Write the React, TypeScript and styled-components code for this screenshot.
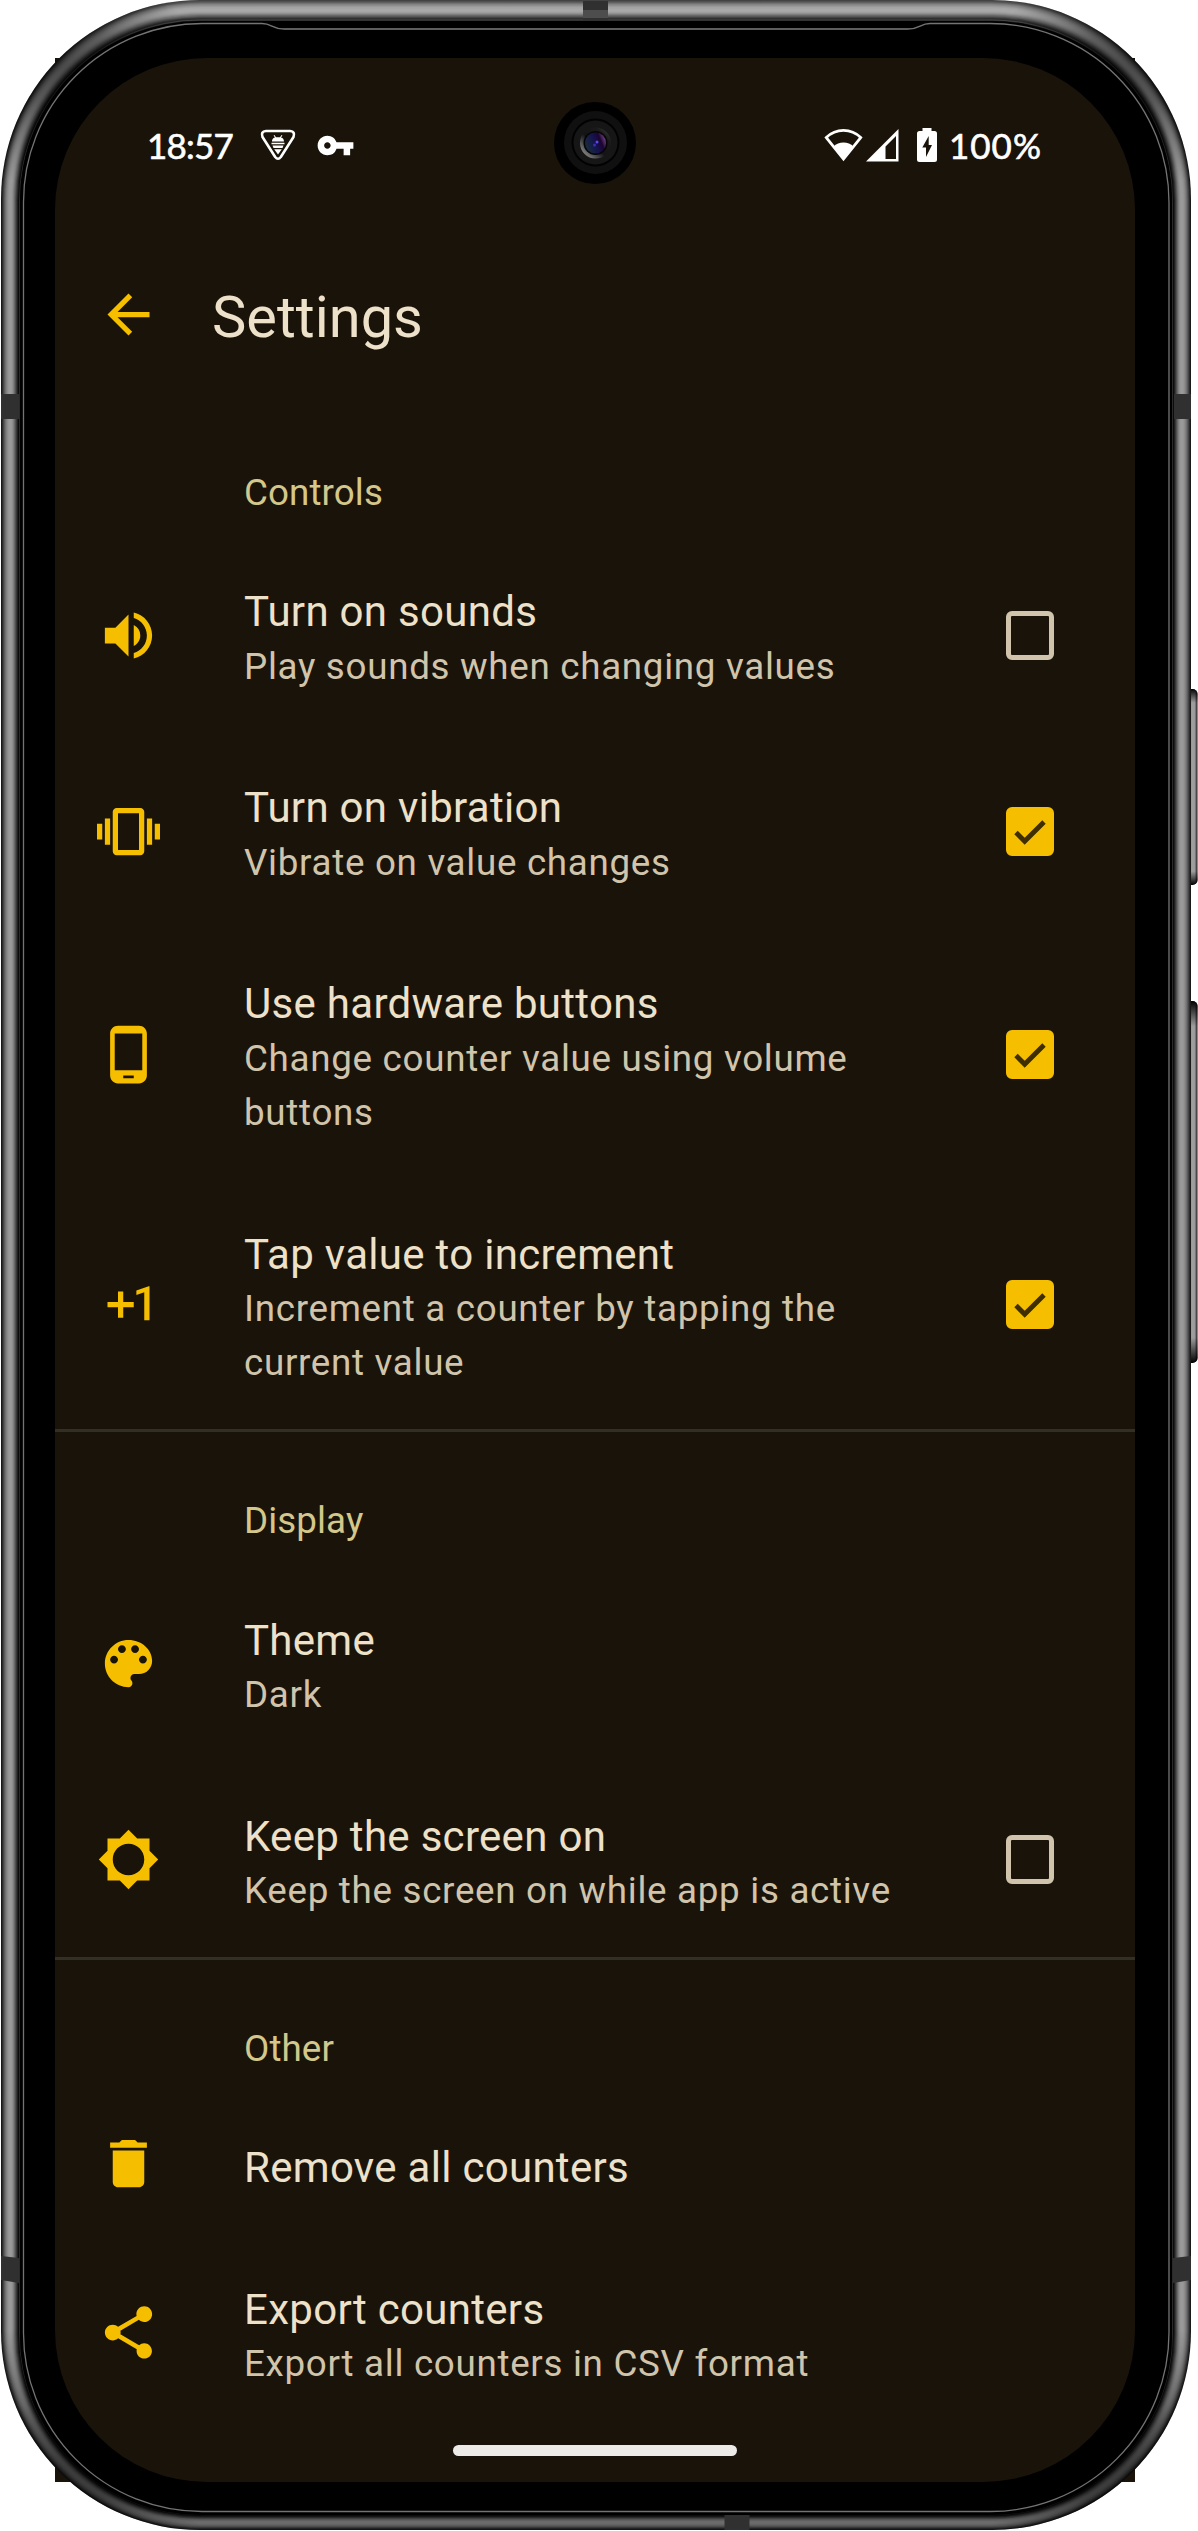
import React from "react";
import styled, { createGlobalStyle } from "styled-components";
import {
  MdArrowBack,
  MdBrightness5,
  MdDelete,
  MdExposurePlus1,
  MdPhoneAndroid,
  MdShare,
  MdVibration,
  MdVolumeUp,
  MdVpnKey,
} from "react-icons/md";

const color = {
  surface: "#1a1309",
  title: "#ede1ca",
  summary: "#d0c5ac",
  category: "#d3c78c",
  accent: "#f5bf00",
  onAccent: "#3f2e00",
  divider: "#323026",
};

const GlobalStyle = createGlobalStyle`
  body {
    margin: 0;
    background: #fff;
  }
`;

const Phone = styled.div`
  position: relative;
  box-sizing: border-box;
  width: 1198px;
  height: 2531px;
  padding: 58px 63px 49px 55px;
  overflow: hidden;
  font-family: Roboto, "Liberation Sans", sans-serif;
`;

const BezelArt = styled.svg`
  position: absolute;
  inset: 0;
`;

const Screen = styled.div`
  position: relative;
  display: flex;
  flex-direction: column;
  height: 2424px;
`;

const StatusBar = styled.div`
  display: flex;
  flex-shrink: 0;
  align-items: center;
  box-sizing: border-box;
  height: 174px;
  padding: 0 92px 0 92px;
  color: #fff;
`;

const StatusText = styled.span<{ $width: number; $tracking: number }>`
  width: ${(p) => p.$width}px;
  font-family: Lato, Roboto, sans-serif;
  font-size: 35px;
  line-height: 44px;
  letter-spacing: ${(p) => p.$tracking}px;
  white-space: nowrap;
  -webkit-text-stroke: 0.6px #fff;
`;

const StatusIcons = styled.div<{ $gap: number; $start: number }>`
  display: flex;
  align-items: center;
  gap: ${(p) => p.$gap}px;
  margin-left: ${(p) => p.$start}px;
`;

const Spacer = styled.div`
  flex: 1;
`;

const AppBar = styled.header`
  display: flex;
  flex-shrink: 0;
  align-items: center;
  gap: 52px;
  height: 170px;
  margin-bottom: 2px;
  padding-left: 42px;
`;

const BackButton = styled.button`
  display: flex;
  padding: 0 0 5px;
  border: 0;
  background: none;
  color: ${color.accent};
`;

const Heading = styled.h1`
  margin: 0;
  color: ${color.title};
  font-size: 57.75px;
  font-weight: 400;
  line-height: 73px;
`;

const Section = styled.section`
  display: flex;
  flex-direction: column;
  flex-shrink: 0;
  & + & {
    border-top: 3px solid ${color.divider};
  }
`;

const Category = styled.h2`
  box-sizing: border-box;
  height: 133px;
  margin: 0;
  padding: 62px 0 0 189px;
  color: ${color.category};
  font-size: 36.75px;
  font-weight: 400;
  line-height: 54px;
  letter-spacing: 0.1px;
`;

const Row = styled.div<{ $single?: boolean }>`
  display: grid;
  grid-template-columns: 147px 690px 1fr;
  align-items: center;
  padding-left: 42px;
  height: ${(p) => (p.$single ? "141px" : "auto")};
`;

const IconSlot = styled.div`
  display: flex;
  color: ${color.accent};
`;

const Copy = styled.div<{ $single?: boolean }>`
  padding: ${(p) => (p.$single ? "7px 0 0" : "47.3px 0 39.2px")};
`;

const Title = styled.div`
  color: ${color.title};
  font-size: 42px;
  line-height: 55.6px;
  letter-spacing: 0.3px;
`;

const Summary = styled.div`
  color: ${color.summary};
  font-size: 36.75px;
  line-height: 54px;
  letter-spacing: 0.7px;
`;

const CheckSlot = styled.div`
  display: flex;
  justify-content: flex-end;
  padding-right: 81px;
`;

const Box = styled.div<{ $checked: boolean }>`
  display: flex;
  box-sizing: border-box;
  width: 48px;
  height: 49px;
  border: 5px solid ${(p) => (p.$checked ? color.accent : color.summary)};
  border-radius: 6px;
  background: ${(p) => (p.$checked ? color.accent : "transparent")};
`;

const NavArea = styled.div`
  display: flex;
  flex: 1;
  align-items: flex-end;
  justify-content: center;
  padding-bottom: 26px;
`;

const NavPill = styled.div`
  width: 284px;
  height: 11px;
  border-radius: 6px;
  background: #edebe8;
`;

/* Tone across the metal rail, from the outer edge inward. */
const RAIL = [
  "#1a1a1a", "#2c2c2c", "#454545", "#5c5c5c", "#707070", "#808080", "#8c8c8c",
  "#959595", "#999999", "#9a9a9a", "#979797", "#8d8d8d", "#7e7e7e", "#686868",
  "#505050", "#383838", "#202020", "#0c0c0c", "#2a2a2a", "#000000",
];

function Bezel() {
  return (
    <BezelArt width="1198" height="2531" viewBox="0 0 1198 2531" fill="none">
      <defs>
        <linearGradient id="shade" x1="0" y1="0" x2="0" y2="1">
          <stop offset="0" stopColor="#fff" stopOpacity="0.18" />
          <stop offset="0.012" stopColor="#fff" stopOpacity="0.1" />
          <stop offset="0.04" stopColor="#000" stopOpacity="0" />
          <stop offset="0.95" stopColor="#000" stopOpacity="0" />
          <stop offset="0.985" stopColor="#000" stopOpacity="0.3" />
          <stop offset="1" stopColor="#000" stopOpacity="0.3" />
        </linearGradient>
        <radialGradient id="corner">
          <stop offset="0" stopColor="#000" stopOpacity="0.52" />
          <stop offset="0.35" stopColor="#000" stopOpacity="0.42" />
          <stop offset="1" stopColor="#000" stopOpacity="0" />
        </radialGradient>
        <clipPath id="body">
          <rect x="1" y="0" width="1190" height="2530" rx="199" />
        </clipPath>
        <linearGradient id="key" x1="0" y1="0" x2="1" y2="0">
          <stop offset="0" stopColor="#4a4a4a" />
          <stop offset="0.6" stopColor="#a0a0a0" />
          <stop offset="0.8" stopColor="#9a9a9a" />
          <stop offset="1" stopColor="#161616" />
        </linearGradient>
        <linearGradient id="keyEnds" x1="0" y1="0" x2="0" y2="1">
          <stop offset="0" stopColor="#000" />
          <stop offset="0.07" stopColor="#000" stopOpacity="0" />
          <stop offset="0.93" stopColor="#000" stopOpacity="0" />
          <stop offset="1" stopColor="#000" />
        </linearGradient>
        <linearGradient id="lensRim" x1="0" y1="1" x2="1" y2="0">
          <stop offset="0.1" stopColor="#8f8f8f" />
          <stop offset="0.45" stopColor="#141414" />
          <stop offset="0.75" stopColor="#1a1a1a" />
          <stop offset="1" stopColor="#444" />
        </linearGradient>
        <linearGradient id="lens" x1="0" y1="0.7" x2="1" y2="0.3">
          <stop offset="0" stopColor="#173039" />
          <stop offset="0.5" stopColor="#15124f" />
          <stop offset="0.75" stopColor="#1c0430" />
          <stop offset="1" stopColor="#7a4a8c" />
        </linearGradient>
      </defs>

      <path fill={color.surface} d="M55 58h1080v2424H55z" />

      {[[689, 196], [1001, 362]].map(([y, h]) => (
        <g key={y}>
          <rect x="1184" y={y} width="13.5" height={h} rx="5" fill="url(#key)" />
          <rect x="1184" y={y} width="13.5" height={h} rx="5" fill="url(#keyEnds)" />
        </g>
      ))}

      {RAIL.map((tone, i) => {
        const side = i * 1.0;
        const top = i * 1.08;
        const bottom = i * 0.82;
        return (
          <rect
            key={i}
            x={1 + side}
            y={top}
            width={1190 - side * 2}
            height={2530 - top - bottom}
            rx={199 - i}
            fill={tone}
          />
        );
      })}
      <g clipPath="url(#body)">
        <rect width="1198" height="2531" fill="url(#shade)" />
        <circle cx="58" cy="60" r="130" fill="url(#corner)" />
        <circle cx="1134" cy="60" r="130" fill="url(#corner)" />
        <circle cx="58" cy="2471" r="150" fill="url(#corner)" />
        <circle cx="1134" cy="2471" r="150" fill="url(#corner)" />
        <path fill="#303030" d="M1 394h18v25H1zM1174 394h17v25h-17zM1 2256l18 2v25l-18-3zM1191 2256l-18 2v25l18-3z" />
        <path fill="#303030" d="M583 1h25v20h-25zM724.5 2515h25v15h-25z" />
        <path fill="#4d4d4d" d="M583 10h25v8h-25z" />
      </g>
      <rect x="20" y="21" width="1152" height="2494" rx="180" fill="#000" />
      <path
        stroke="#747474"
        strokeWidth="1.3"
        d="M202 23.5H262C272 23.5 272 29 284 29H908C920 29 920 23.5 930 23.5H990A179 179 0 0 1 1169 202.5V2332A179 179 0 0 1 990 2511.5H202A178.5 178.5 0 0 1 23.5 2332V202.5A178.5 178.5 0 0 1 202 23.5Z"
      />
      <path stroke="#5f5f5f" strokeWidth="1.6" d="M284 29H908" />
      <rect x="55" y="58" width="1080" height="2424" rx="152" fill={color.surface} />

      <circle cx="595" cy="143" r="41" fill="#000" />
      <circle cx="595.5" cy="142.5" r="31.5" fill="#101010" />
      <circle cx="595.5" cy="142.5" r="24" fill="#020202" />
      <circle cx="595.5" cy="142.5" r="22" fill="#161616" />
      <circle cx="595.5" cy="143" r="15.5" fill="url(#lensRim)" />
      <circle cx="595.5" cy="143" r="12" fill="#050507" />
      <circle cx="595.5" cy="143" r="10.5" fill="url(#lens)" />
      <circle cx="597" cy="142" r="1.5" fill="#5a48e8" />
      <circle cx="594.5" cy="145" r="1.5" fill="#3a2fb0" />
    </BezelArt>
  );
}

function ShieldBugIcon() {
  return (
    <svg width="36" height="34" viewBox="0 0 36 34" fill="none">
      <path
        stroke="#fff"
        strokeWidth="2.6"
        strokeLinejoin="round"
        d="M6 3H30Q35.5 3.5 33.5 9L20.8 29Q18 32.5 15.2 29L2.5 9Q0.5 3.500 6 3Z"
      />
      <path
        fill="#fff"
        d="M12 13.5C12 10.5 14 9.8 15 9.5L13.6 7.5L14.4 7L16 9.2H20L21.6 7L22.4 7.5L21 9.5C22 9.8 24 10.5 24 13.5ZM11.5 14.7H24.5V16.2H11.5ZM12.5 17.4H23.5L22.5 20H13.5ZM14.2 21.2H21.8L18 26.5Z"
      />
    </svg>
  );
}

function WifiIcon() {
  return (
    <svg width="39" height="34" viewBox="0 0 39 34" fill="none">
      <path
        stroke="#fff"
        strokeWidth="2.8"
        d="M2.3 9.5C12 0 27 0 36.7 9.5L19.5 31Z"
      />
      <path fill="#fff" d="M9.5 18.5C14.5 13 24.5 13 29.5 18.5L19.5 32Z" />
    </svg>
  );
}

function SignalIcon() {
  return (
    <svg width="33" height="34" viewBox="0 0 33 34">
      <path fill="#fff" fillRule="evenodd" d="M32.5 1V33.5H0ZM19.5 18.5V31H30V8Z" />
    </svg>
  );
}

function BatteryIcon() {
  return (
    <svg width="20" height="34" viewBox="0 0 20 34">
      <path
        fill="#fff"
        fillRule="evenodd"
        d="M5.5 0H14.5V3H17.5Q20 3 20 5.5V31.5Q20 34 17.5 34H2.5Q0 34 0 31.5V5.5Q0 3 2.5 3H5.5ZM11.7 8L5.3 19.5H9V29L15 17H11.7Z"
      />
    </svg>
  );
}

function PaletteIcon({ size = 24 }: { size?: number }) {
  return (
    <svg width={size} height={size} viewBox="0 0 24 24" fill="currentColor">
      <path d="M12 3c-4.970 0-9 4.030-9 9s4.030 9 9 9c.83 0 1.500-.67 1.500-1.500 0-.39-.15-.74-.39-1.010-.23-.26-.38-.61-.38-.99 0-.83.67-1.500 1.500-1.500H16c2.760 0 5-2.240 5-5 0-4.420-4.030-8-9-8zm-5.500 9c-.83 0-1.500-.67-1.500-1.500S5.670 9 6.500 9 8 9.670 8 10.500 7.330 12 6.500 12zm3-4C8.670 8 8 7.330 8 6.500S8.670 5 9.500 5s1.500.67 1.500 1.500S10.330 8 9.500 8zm5 0c-.83 0-1.500-.67-1.500-1.500S13.670 5 14.500 5s1.500.67 1.500 1.500S15.330 8 14.500 8zm3 4c-.83 0-1.500-.67-1.500-1.500S16.670 9 17.500 9s1.500.67 1.500 1.500-.67 1.500-1.500 1.500z" />
    </svg>
  );
}

function Checkbox({ checked }: { checked: boolean }) {
  return (
    <Box $checked={checked} role="checkbox" aria-checked={checked}>
      {checked && (
        <svg width="38" height="39" viewBox="0 0 38 39" fill="none">
          <path stroke={color.onAccent} strokeWidth="4.8" d="M5 20.500L13.700 29.300L33 10" />
        </svg>
      )}
    </Box>
  );
}

interface Item {
  icon: React.ComponentType<{ size?: number }>;
  title: string;
  summary?: string[];
  checked?: boolean;
}

const SECTIONS: { name: string; items: Item[] }[] = [
  {
    name: "Controls",
    items: [
      { icon: MdVolumeUp, title: "Turn on sounds", summary: ["Play sounds when changing values"], checked: false },
      { icon: MdVibration, title: "Turn on vibration", summary: ["Vibrate on value changes"], checked: true },
      { icon: MdPhoneAndroid, title: "Use hardware buttons", summary: ["Change counter value using volume", "buttons"], checked: true },
      { icon: MdExposurePlus1, title: "Tap value to increment", summary: ["Increment a counter by tapping the", "current value"], checked: true },
    ],
  },
  {
    name: "Display",
    items: [
      { icon: PaletteIcon, title: "Theme", summary: ["Dark"] },
      { icon: MdBrightness5, title: "Keep the screen on", summary: ["Keep the screen on while app is active"], checked: false },
    ],
  },
  {
    name: "Other",
    items: [
      { icon: MdDelete, title: "Remove all counters" },
      { icon: MdShare, title: "Export counters", summary: ["Export all counters in CSV format"] },
    ],
  },
];

function SettingRow({ icon: Icon, title, summary, checked }: Item) {
  const single = !summary;
  return (
    <Row $single={single}>
      <IconSlot>
        <Icon size={63} />
      </IconSlot>
      <Copy $single={single}>
        <Title>{title}</Title>
        {summary?.map((line) => (
          <Summary key={line}>{line}</Summary>
        ))}
      </Copy>
      {checked !== undefined && (
        <CheckSlot>
          <Checkbox checked={checked} />
        </CheckSlot>
      )}
    </Row>
  );
}

export default function App() {
  return (
    <>
      <GlobalStyle />
      <Phone>
        <Bezel />
        <Screen>
          <StatusBar>
            <StatusText $width={87} $tracking={-0.8}>18:57</StatusText>
            <StatusIcons $gap={20} $start={26}>
              <ShieldBugIcon />
              <MdVpnKey size={39} />
            </StatusIcons>
            <Spacer />
            <StatusIcons $gap={3} $start={0}>
              <WifiIcon />
              <SignalIcon />
            </StatusIcons>
            <StatusIcons $gap={12} $start={18}>
              <BatteryIcon />
              <StatusText $width={94} $tracking={1}>100%</StatusText>
            </StatusIcons>
          </StatusBar>
          <AppBar>
            <BackButton aria-label="Back">
              <MdArrowBack size={63} />
            </BackButton>
            <Heading>Settings</Heading>
          </AppBar>
          {SECTIONS.map((section) => (
            <Section key={section.name}>
              <Category>{section.name}</Category>
              {section.items.map((item) => (
                <SettingRow key={item.title} {...item} />
              ))}
            </Section>
          ))}
          <NavArea>
            <NavPill />
          </NavArea>
        </Screen>
      </Phone>
    </>
  );
}
